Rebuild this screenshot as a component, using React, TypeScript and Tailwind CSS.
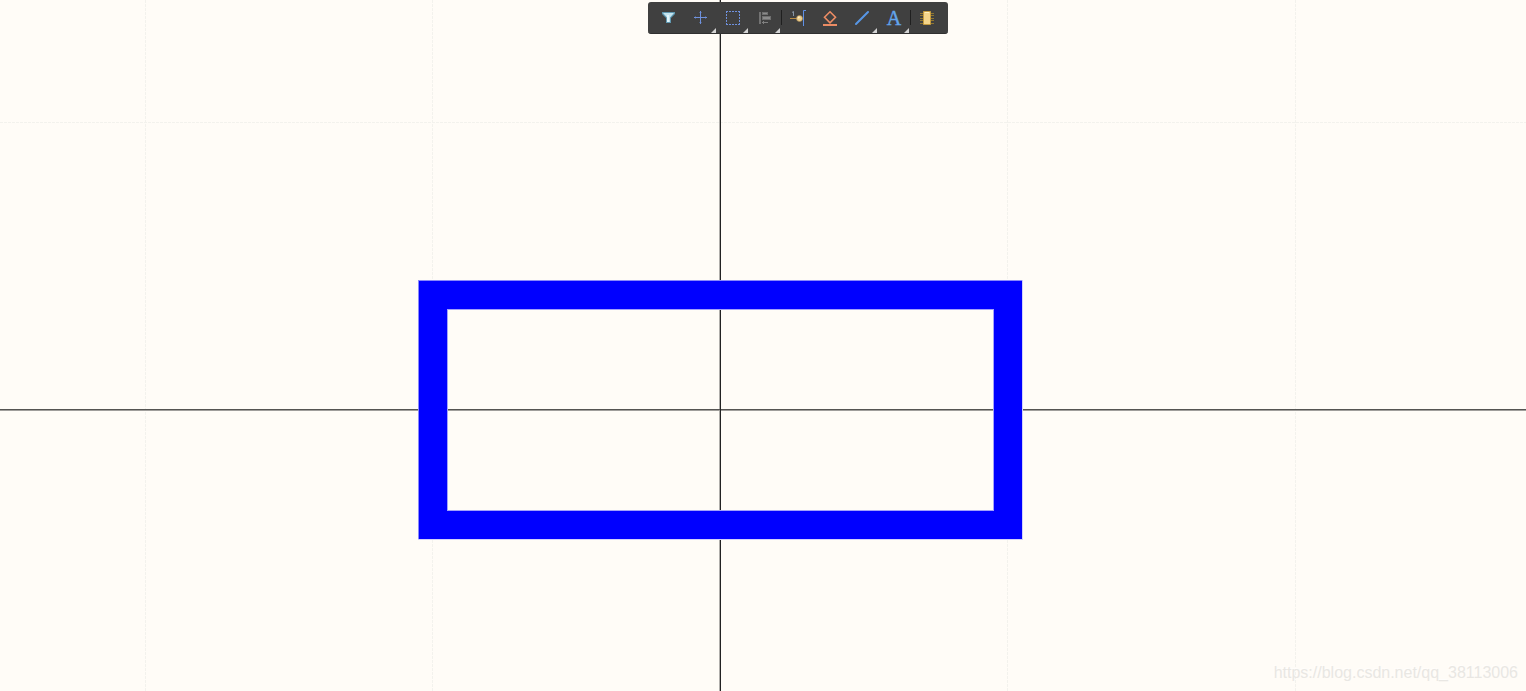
import type { ReactNode } from "react";

type Tool = {
  name: string;
  icon: ReactNode;
  hasMenu?: boolean;
  dividerAfter?: boolean;
};

const tools: Tool[] = [
  {
    name: "Selection filter",
    icon: (
      <>
        <path d="M9 10h13v2l-4 4v5h-5v-5l-4-4z" fill="#5f97b0" />
        <path d="M10 11h11l-4 4.500V20h-3v-4.500z" fill="#c3e4ef" />
        <path d="M14 13h2v7h-2z" fill="#e2f5fa" />
      </>
    ),
  },
  {
    name: "Move",
    hasMenu: true,
    icon: (
      <g fill="#6f91dc">
        <path d="M9 15h13v1H9zM15 9h1v13h-1z" />
        <path d="M10 14h1v3h-1zM20 14h1v3h-1zM14 10h3v1h-3zM14 20h3v1h-3z" opacity=".4" />
      </g>
    ),
  },
  {
    name: "Select area",
    hasMenu: true,
    icon: (
      <path
        d="M9 9.500h14M9 22.500h14M9.500 9v14M22.500 9v14"
        fill="none"
        stroke="#6f91dc"
        strokeDasharray="2 1"
      />
    ),
  },
  {
    name: "Align",
    hasMenu: true,
    dividerAfter: true,
    icon: (
      <>
        <path d="M10 10h2v12h-2z" fill="#737373" />
        <path d="M13 10h6v3h-6zM13 14h9v4h-9z" fill="#707070" />
        <path d="M14 11h4v1h-4zM14 15h7v2h-7z" fill="#8c8c8c" />
        <path d="M13 20h6v1h-6zM14 19h1v3h-1z" fill="#808080" />
      </>
    ),
  },
  {
    name: "Place pin",
    icon: (
      <>
        <path d="M10 10.500l1.500-1V14" fill="none" stroke="#8996a5" />
        <path d="M8 16h7v1H8z" fill="#b88a42" />
        <circle cx="17.500" cy="16.500" r="3" fill="#edcf8e" stroke="#a98850" strokeWidth=".6" />
        <circle cx="16.800" cy="15.600" r="1" fill="#fff0c8" />
        <path d="M24 8.500h-2.500V24" fill="none" stroke="#5f91e6" />
      </>
    ),
  },
  {
    name: "Place sheet symbol",
    icon: (
      <>
        <path d="M16 9.800l5.500 5.500L16 20.800l-5.500-5.500z" fill="none" stroke="#ec8c64" strokeWidth="1.600" />
        <path d="M9 22h14v2H9z" fill="#ec8c64" />
      </>
    ),
  },
  {
    name: "Place line",
    hasMenu: true,
    icon: <path d="M10 22L22 10" stroke="#5796e6" strokeWidth="2" strokeLinecap="round" />,
  },
  {
    name: "Place text",
    hasMenu: true,
    dividerAfter: true,
    icon: (
      <text
        x="16"
        y="23"
        textAnchor="middle"
        className="fill-[#62a5ed] stroke-[#62a5ed] stroke-[0.4] font-['Liberation_Serif',serif] text-[20px]"
      >
        A
      </text>
    ),
  },
  {
    name: "Place part",
    icon: (
      <>
        <path
          d="M9 11.500h14M9 13.500h14M9 16.500h14M9 18.500h14M9 21.500h14"
          stroke="#8f7632"
        />
        <path d="M12.500 9.500h7v13h-7z" fill="#f5d58a" stroke="#c69c3e" />
        <path d="M14 10h4v1h-4z" fill="#fff0bd" />
      </>
    ),
  },
];

const verticalGrid = [145, 432, 1007, 1295];

const Toolbar = () => (
  <div
    role="toolbar"
    aria-label="Drawing tools"
    className="absolute top-0.5 left-[648px] flex h-8 rounded-[3px] border-b border-[#303030] bg-[#404040] px-[5px]"
  >
    {tools.map((tool) => (
      <div key={tool.name} className="flex">
        <button type="button" aria-label={tool.name} className="h-8 w-8">
          <svg viewBox="0 0 32 32" className="h-8 w-8" aria-hidden="true">
            {tool.icon}
            {tool.hasMenu && <path d="M31 26v5h-5z" fill="#d4d4d4" />}
          </svg>
        </button>
        {tool.dividerAfter && <span className="my-2 w-px bg-[#1f1f1f]" />}
      </div>
    ))}
  </div>
);

const Drawing = () => (
  <svg
    className="block h-screen w-full"
    shapeRendering="crispEdges"
    role="img"
    aria-label="Component body"
  >
    <g stroke="#f3f2ed" strokeDasharray="3 1">
      {verticalGrid.map((x) => (
        <line key={x} x1={x + 0.5} x2={x + 0.5} y1="0" y2="100%" />
      ))}
      <line x1="0" x2="100%" y1="122.5" y2="122.5" />
    </g>

    {/* origin axes */}
    <rect x="719" y="0" width="1" height="100%" fill="#b0aeab" />
    <rect x="0" y="410" width="100%" height="1" fill="#a09e9b" />
    <rect x="0" y="409" width="100%" height="1" fill="#555452" />
    <rect x="720" y="0" width="1" height="100%" fill="#222" />

    {/* body outline, with a soft one-pixel edge */}
    <rect x="418" y="280" width="605" height="260" fill="#d2d1fb" />
    <rect x="418" y="280" width="604" height="259" fill="#8a89fb" />
    <rect x="419" y="281" width="603" height="258" fill="#0000ff" />
    <rect x="447" y="309" width="547" height="202" fill="#a3a2fb" />
    <rect x="448" y="310" width="545" height="200" fill="#fffcf7" />
    <rect x="719" y="310" width="1" height="200" fill="#b0aeab" />
    <rect x="448" y="410" width="545" height="1" fill="#a09e9b" />
    <rect x="448" y="409" width="545" height="1" fill="#555452" />
    <rect x="720" y="310" width="1" height="200" fill="#222" />
  </svg>
);

const App = () => {
  return (
    <main className="relative min-h-screen overflow-hidden bg-[#fffcf7]">
      <Drawing />
      <Toolbar />
      <a
        href="https://blog.csdn.net/qq_38113006"
        className="absolute right-2 bottom-1.5 font-['Liberation_Sans',sans-serif] text-base leading-6 text-[#e9e7e3] [text-shadow:-1px_-1px_0_#fffefc]"
      >
        https://blog.csdn.net/qq_38113006
      </a>
    </main>
  );
};

export default App;
